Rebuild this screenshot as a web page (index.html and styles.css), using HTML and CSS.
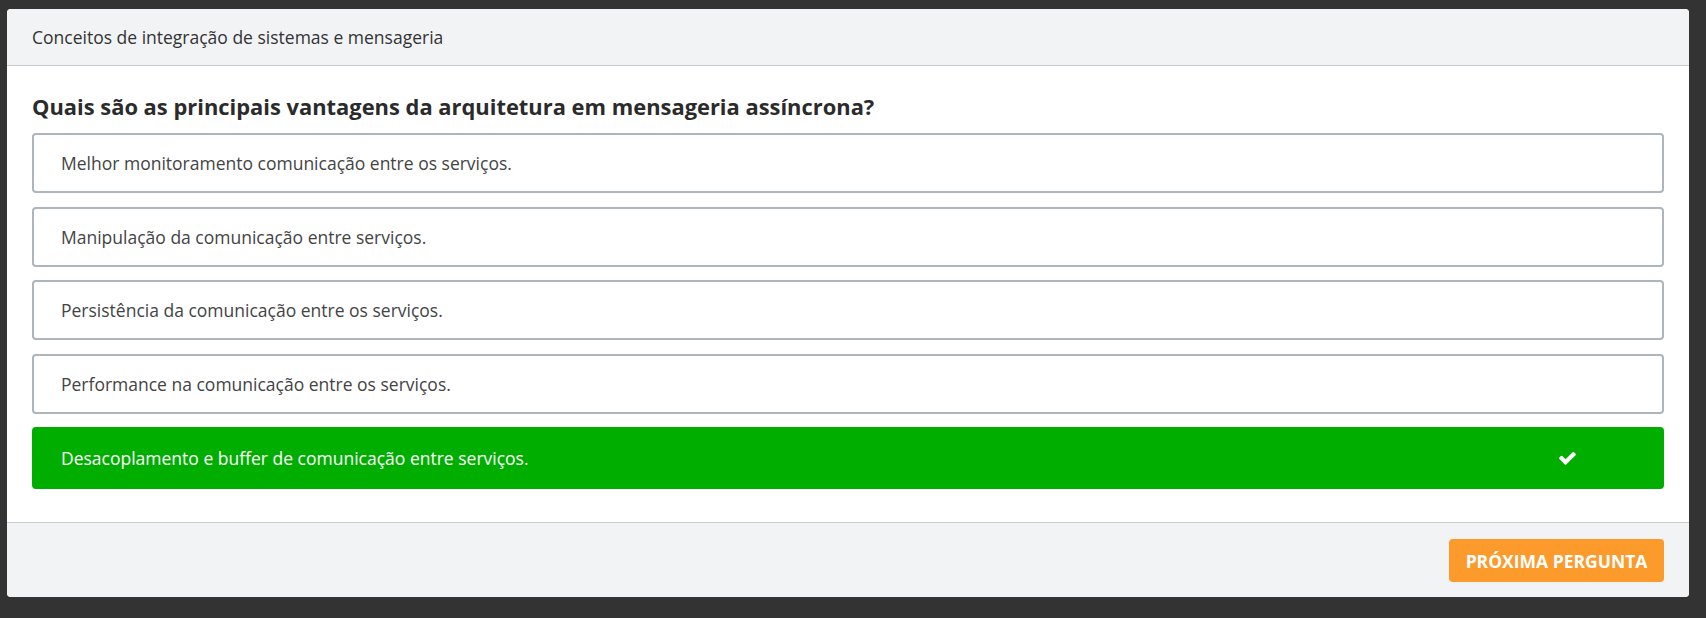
FILE: index.html
```html
<!DOCTYPE html>
<html lang="pt-BR">
<head>
<meta charset="utf-8">
<title>Quiz</title>
<link rel="stylesheet" href="styles.css">
</head>
<body>
<div class="card">
  <div class="card-header">Conceitos de integração de sistemas e mensageria</div>
  <div class="card-body">
    <h2 class="question">Quais são as principais vantagens da arquitetura em mensageria assíncrona?</h2>
    <div class="options">
      <div class="option">Melhor monitoramento comunicação entre os serviços.</div>
      <div class="option">Manipulação da comunicação entre serviços.</div>
      <div class="option">Persistência da comunicação entre os serviços.</div>
      <div class="option">Performance na comunicação entre os serviços.</div>
      <div class="option correct">
        <span>Desacoplamento e buffer de comunicação entre serviços.</span>
        <svg class="check" viewBox="110 260 1575 1280" width="17" height="14" aria-hidden="true"><path fill="#fff" d="M1671 566q0 40-28 68l-724 724-136 136q-28 28-68 28t-68-28l-136-136-362-362q-28-28-28-68t28-68l136-136q28-28 68-28t68 28l294 295 656-657q28-28 68-28t68 28l136 136q28 28 28 68z"/></svg>
      </div>
    </div>
  </div>
  <div class="card-footer">
    <button class="next">PRÓXIMA PERGUNTA</button>
  </div>
</div>
</body>
</html>
```
FILE: styles.css
```css
html, body {
  margin: 0;
  padding: 0;
  background: #333333;
  font-family: "Open Sans", "Noto Sans", sans-serif;
}
body {
  padding: 9px 17px 21px 7px;
}
.card {
  background: #ffffff;
  border-radius: 4px;
  overflow: hidden;
}
.card-header {
  height: 56px;
  display: flex;
  align-items: center;
  padding: 0 25px;
  background: #f2f3f5;
  border-bottom: 1px solid #c6cbd0;
  color: #333333;
  font-size: 17.5px;
}
.card-body {
  padding: 26px 25px 33px;
}
.question {
  margin: 0 0 12px;
  font-size: 21.9px;
  font-weight: 700;
  line-height: 29px;
  color: #2b2b2b;
}
.options {
  display: flex;
  flex-direction: column;
  gap: 13.5px;
}
.option {
  height: 60px;
  box-sizing: border-box;
  display: flex;
  align-items: center;
  justify-content: space-between;
  padding: 0 27px;
  border: 2px solid #adb5bd;
  border-radius: 4px;
  color: #444444;
  font-size: 17.5px;
}
.option.correct {
  height: 62px;
  background: #00ae00;
  border-color: #00ae00;
  color: #ffffff;
  padding-right: 86px;
}
.check {
  display: block;
}
.card-footer {
  display: flex;
  justify-content: flex-end;
  padding: 16px 25px 15px;
  background: #f2f3f5;
  border-top: 1px solid #c8cbcf;
}
.next {
  width: 215px;
  height: 43px;
  border: none;
  border-radius: 4px;
  background: #fc9a2c;
  color: #ffffff;
  font-family: "Open Sans", "Noto Sans", sans-serif;
  font-size: 17.5px;
  font-weight: 700;
  cursor: pointer;
}
```
